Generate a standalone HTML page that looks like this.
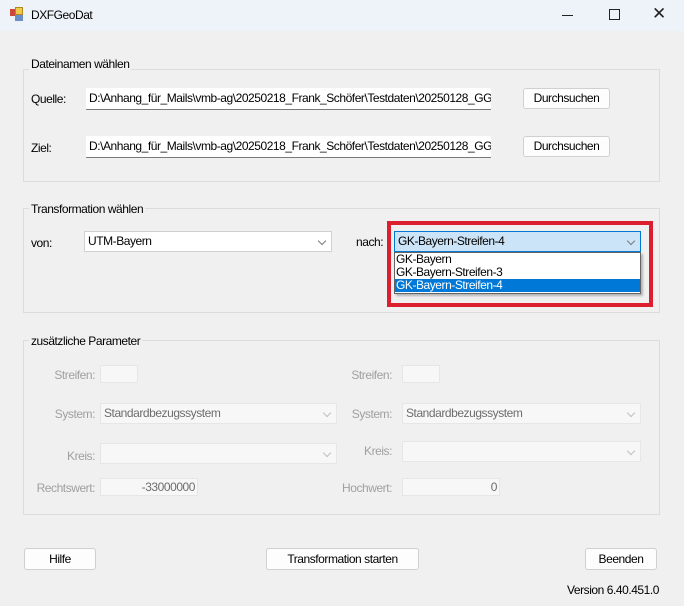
<!DOCTYPE html>
<html><head><meta charset="utf-8"><style>
*{margin:0;padding:0;box-sizing:border-box}
body{width:684px;height:606px;background:#f0f0f0;font-family:"Liberation Sans",sans-serif;font-size:12px;color:#000;position:relative;overflow:hidden;letter-spacing:-0.45px}
.a{position:absolute;white-space:nowrap}
.tb{left:0;top:0;width:684px;height:31px;background:#eef3f9}
.grp{border:1px solid #dcdcdc}
.gl{background:#f0f0f0;padding:0 2px;line-height:13px}
.tx{background:#fff;border-bottom:1px solid #7a7a7a;line-height:20px;padding-left:3px;overflow:hidden}
.btn{background:#fdfdfd;border:1px solid #d0d0d0;border-radius:3px;text-align:center;line-height:19px}
.cb{background:#fff;border:1px solid #d0d0d0;line-height:19px;padding-left:3px}
.dis{background:#f7f7f7;border:1px solid #e6e6e6;color:#6d6d6d}
.g{color:#a0a0a0;text-align:right;width:80px}
.chev{position:absolute;right:6px;top:6px;width:6px;height:6px;border-right:1px solid #7a7a7a;border-bottom:1px solid #7a7a7a;transform:rotate(45deg)}
.dis .chev{border-color:#c0c0c0}
</style></head><body>
<div class="a tb"></div>
<div class="a" style="left:10px;top:9px;width:6px;height:7px;background:#c94a3a"></div>
<div class="a" style="left:15px;top:7px;width:8px;height:8px;background:#f2c94c;border:1px solid #b08a20"></div>
<div class="a" style="left:15px;top:15px;width:8px;height:6px;background:#6a8fc8"></div>
<div class="a" style="left:31px;top:8px;font-size:12px">DXFGeoDat</div>
<div class="a" style="left:562px;top:15px;width:11px;height:1px;background:#222"></div>
<div class="a" style="left:609px;top:9px;width:11px;height:11px;border:1px solid #222"></div>
<div class="a" style="left:652px;top:5px;font-size:17px;color:#222;line-height:18px">✕</div>

<div class="a grp" style="left:23px;top:69px;width:637px;height:113px"></div>
<div class="a gl" style="left:29px;top:58px">Dateinamen wählen</div>
<div class="a" style="left:31px;top:92px">Quelle:</div>
<div class="a tx" style="left:86px;top:88px;width:405px;height:22px">D:\Anhang_für_Mails\vmb-ag\20250218_Frank_Schöfer\Testdaten\20250128_GG</div>
<div class="a btn" style="left:523px;top:88px;width:87px;height:21px">Durchsuchen</div>
<div class="a" style="left:31px;top:141px">Ziel:</div>
<div class="a tx" style="left:86px;top:136px;width:405px;height:22px">D:\Anhang_für_Mails\vmb-ag\20250218_Frank_Schöfer\Testdaten\20250128_GG</div>
<div class="a btn" style="left:523px;top:136px;width:87px;height:21px">Durchsuchen</div>

<div class="a grp" style="left:23px;top:208px;width:637px;height:105px"></div>
<div class="a gl" style="left:29px;top:203px">Transformation wählen</div>
<div class="a" style="left:31px;top:236px">von:</div>
<div class="a cb" style="left:84px;top:231px;width:248px;height:21px">UTM-Bayern<div class="chev"></div></div>
<div class="a" style="left:356px;top:235px">nach:</div>
<div class="a" style="left:387px;top:221px;width:266px;height:86px;border:4px solid #dc1f2e"></div>
<div class="a cb" style="left:394px;top:231px;width:247px;height:21px;background:#cce4f7;border-color:#0078d4">GK-Bayern-Streifen-4<div class="chev"></div></div>
<div class="a" style="left:394px;top:252px;width:247px;height:42px;background:#fff;border:1px solid #646464;box-shadow:2px 2px 2px rgba(0,0,0,.25);line-height:13px">
<div style="padding-left:1px">GK-Bayern</div>
<div style="padding-left:1px">GK-Bayern-Streifen-3</div>
<div style="padding-left:1px;background:#0078d7;color:#fff">GK-Bayern-Streifen-4</div>
</div>

<div class="a grp" style="left:23px;top:340px;width:637px;height:175px"></div>
<div class="a gl" style="left:29px;top:335px">zusätzliche Parameter</div>
<div class="a g" style="left:15px;top:368px">Streifen:</div>
<div class="a dis" style="left:100px;top:365px;width:38px;height:18px"></div>
<div class="a g" style="left:312px;top:368px">Streifen:</div>
<div class="a dis" style="left:402px;top:365px;width:38px;height:18px"></div>
<div class="a g" style="left:15px;top:407px">System:</div>
<div class="a cb dis" style="left:100px;top:403px;width:237px;height:21px">Standardbezugssystem<div class="chev"></div></div>
<div class="a g" style="left:312px;top:407px">System:</div>
<div class="a cb dis" style="left:402px;top:403px;width:239px;height:21px">Standardbezugssystem<div class="chev"></div></div>
<div class="a g" style="left:15px;top:449px">Kreis:</div>
<div class="a cb dis" style="left:100px;top:443px;width:237px;height:21px"><div class="chev"></div></div>
<div class="a g" style="left:312px;top:444px">Kreis:</div>
<div class="a cb dis" style="left:402px;top:441px;width:239px;height:21px"><div class="chev"></div></div>
<div class="a g" style="left:15px;top:481px">Rechtswert:</div>
<div class="a dis" style="left:100px;top:478px;width:98px;height:18px;text-align:right;padding-right:2px;line-height:16px">-33000000</div>
<div class="a g" style="left:312px;top:481px">Hochwert:</div>
<div class="a dis" style="left:402px;top:478px;width:98px;height:18px;text-align:right;padding-right:2px;line-height:16px">0</div>

<div class="a btn" style="left:24px;top:548px;width:72px;height:22px;line-height:20px">Hilfe</div>
<div class="a btn" style="left:266px;top:548px;width:153px;height:22px;line-height:20px">Transformation starten</div>
<div class="a btn" style="left:585px;top:548px;width:72px;height:22px;line-height:20px">Beenden</div>
<div class="a" style="left:567px;top:583px">Version 6.40.451.0</div>
</body></html>
